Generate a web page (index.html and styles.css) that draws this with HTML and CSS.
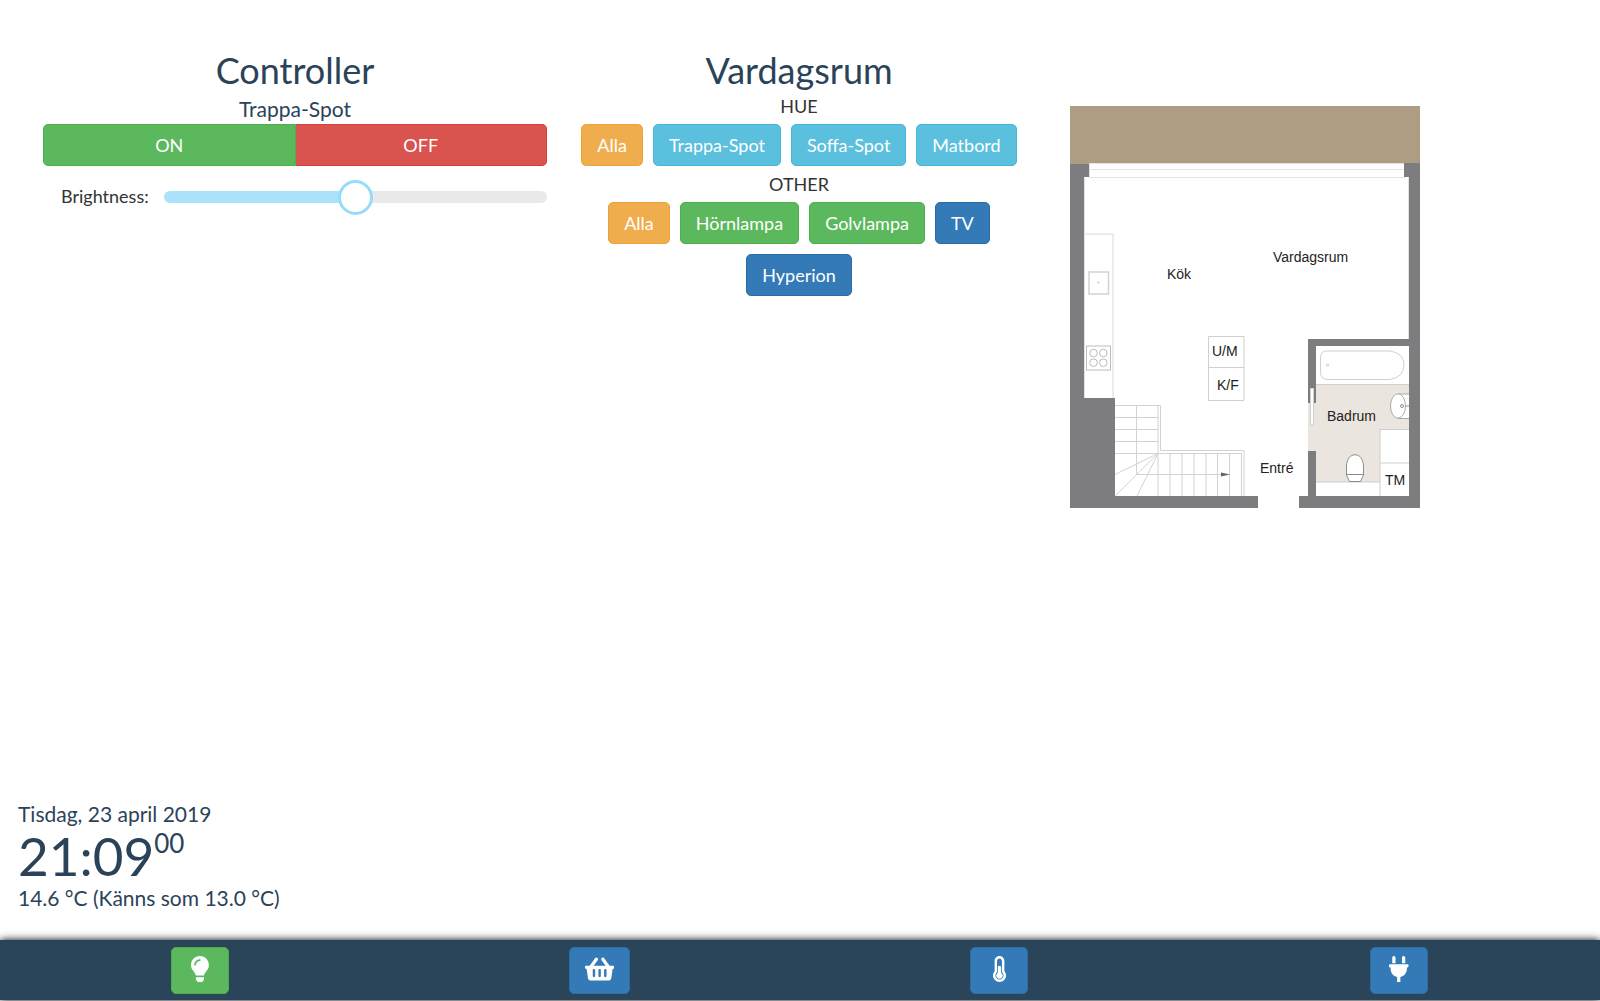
FILE: index.html
```html
<!DOCTYPE html>
<html lang="sv">
<head>
<meta charset="utf-8">
<meta name="viewport" content="width=device-width, initial-scale=1">
<title>Vardagsrum</title>
<link rel="stylesheet" href="styles.css">
</head>
<body>
<main class="panels">
  <section class="panel">
    <h1 class="title">Controller</h1>
    <h2 class="device">Trappa-Spot</h2>
    <div class="switch">
      <button type="button" class="btn btn-success">ON</button>
      <button type="button" class="btn btn-danger">OFF</button>
    </div>
    <div class="brightness">
      <label for="brightness">Brightness:</label>
      <input id="brightness" class="slider" type="range" min="0" max="100" value="50">
    </div>
  </section>

  <section class="panel">
    <h1 class="title">Vardagsrum</h1>
    <h2 class="group">HUE</h2>
    <div class="lights">
      <button type="button" class="btn btn-warning">Alla</button>
      <button type="button" class="btn btn-info">Trappa-Spot</button>
      <button type="button" class="btn btn-info">Soffa-Spot</button>
      <button type="button" class="btn btn-info">Matbord</button>
    </div>
    <h2 class="group">OTHER</h2>
    <div class="lights">
      <button type="button" class="btn btn-warning">Alla</button>
      <button type="button" class="btn btn-success">Hörnlampa</button>
      <button type="button" class="btn btn-success">Golvlampa</button>
      <button type="button" class="btn btn-primary">TV</button>
      <button type="button" class="btn btn-primary">Hyperion</button>
    </div>
  </section>

  <section class="panel panel-plan">
    <svg class="plan" viewBox="0 0 350 402" role="img" aria-label="Planritning">
      <rect width="350" height="59" fill="#af9d83"/>
      <!-- window -->
      <g fill="#fff" stroke="#e2e2e2">
        <rect x="19.500" y="57.500" width="315" height="14"/>
        <path d="M19 63.500H334"/>
      </g>
      <!-- walls -->
      <path fill="#7d7d7f" d="M0 58H19V71H14V292H45V390H188V402H0ZM334 57H350V402H229V390H238V345H246V390H339V240H246V297H238V233H339V71H334Z"/>
      <path fill="none" stroke="#e2e2e2" d="M14.500 292V71.500M338.500 233V71.500"/>
      <!-- kitchen -->
      <g fill="none" stroke="#e6e6e6">
        <path d="M14 128H43V292" stroke-width="1.500"/>
        <rect x="19" y="166" width="19.500" height="22" stroke="#d2d2d2" stroke-width="1.500"/>
        <circle cx="28.500" cy="176.500" r=".7" stroke="#ccc"/>
        <g stroke="#bcbcbc">
          <rect x="16.500" y="240" width="24" height="24"/>
          <circle cx="23.500" cy="247" r="3.800"/><circle cx="33.300" cy="247" r="3.800"/>
          <circle cx="23.500" cy="256.700" r="3.800"/><circle cx="33.300" cy="256.700" r="3.800"/>
        </g>
      </g>
      <path fill="none" stroke="#d0d0d0" d="M138.500 230.500H174V294.500H138.500ZM138.500 261.500H174"/>
      <!-- stairs -->
      <path fill="none" stroke="#d2d2d2" d="M45 299.500H90.500V344.500H174V390M88 299.500V347.500H171.500V390M66.500 299.500V368.500H151M45 311.500H88M45 323.500H88M45 335.500H88M45 347.500H88V390M88 347.500L45 368.500M88 347.500L45 390M88 347.500L67 390M100 347.500V390M112 347.500V390M124 347.500V390M136 347.500V390M147.500 347.500V390M159.500 347.500V390"/>
      <path fill="#666" d="M151 366.500L160 368.500L151 370.500Z"/>
      <!-- bathroom -->
      <path fill="#eae6df" d="M246 278H339V323H310V376H246V345H238V297H246Z"/>
      <g fill="#fff" stroke="#cfcfcf">
        <path fill="none" d="M246 278.500H339M246 376H310M310 390V323.500H339M310 357H339"/>
        <path d="M257 245H320Q334 247 334 259T320 273.500H257Q250.500 273 250.500 266V252Q250.500 245 257 245Z"/>
        <circle cx="257.500" cy="259" r="1.200"/>
        <rect x="240.500" y="282.500" width="3" height="36.500"/>
        <g stroke="#8c8c8c">
          <path stroke="#aaa" d="M339 288H328V312.500H339"/>
          <ellipse cx="328" cy="300" rx="7.500" ry="12.200" stroke="#aaa"/>
          <circle cx="332" cy="300" r="1.500"/><path d="M336 300H339"/>
          <path d="M276.500 369V360C277 353 280 348.800 285 348.800S293 353 293.500 360V369L290.500 375.500H279.500ZM277 368.500H293"/>
        </g>
      </g>
      <g class="plan-text">
        <text x="97" y="173">Kök</text>
        <text x="203" y="156">Vardagsrum</text>
        <text x="142" y="250">U/M</text>
        <text x="147" y="284">K/F</text>
        <text x="257" y="315">Badrum</text>
        <text x="190" y="367">Entré</text>
        <text x="315" y="379">TM</text>
      </g>
    </svg>
  </section>
</main>

<section class="status">
  <p class="info">Tisdag, 23 april 2019</p>
  <p class="clock"><span>21:09</span><span class="seconds">00</span></p>
  <p class="info">14.6 °C (Känns som 13.0 °C)</p>
</section>

<nav class="tabs">
  <div class="tab"><button type="button" class="tab-btn btn-success" aria-label="Belysning">
    <svg class="icon" viewBox="0 0 352 512"><path d="M96.060 454.350c.01 6.290 1.870 12.450 5.360 17.690l17.090 25.690a31.990 31.990 0 0 0 26.640 14.280h61.710a31.990 31.990 0 0 0 26.640-14.280l17.090-25.690a31.989 31.989 0 0 0 5.360-17.690l.04-38.350H96.010l.05 38.350zM0 176c0 44.370 16.450 84.850 43.560 115.780 16.520 18.850 42.360 58.230 52.210 91.450.04.26.07.52.11.78h160.240c.04-.26.07-.51.11-.78 9.850-33.220 35.690-72.600 52.210-91.450C335.550 260.850 352 220.370 352 176 352 78.610 272.910-.3 175.450 0 73.440.31 0 82.970 0 176zm176-80c-44.110 0-80 35.890-80 80 0 8.840-7.160 16-16 16s-16-7.160-16-16c0-61.760 50.240-112 112-112 8.840 0 16 7.160 16 16s-7.160 16-16 16z"/></svg>
  </button></div>
  <div class="tab"><button type="button" class="tab-btn btn-primary" aria-label="Inköp">
    <svg class="icon" viewBox="0 0 576 512"><path d="M576 216v16c0 13.255-10.745 24-24 24h-8l-26.113 182.788C514.509 462.435 494.257 480 470.370 480H105.630c-23.887 0-44.139-17.565-47.518-41.212L32 256h-8c-13.255 0-24-10.745-24-24v-16c0-13.255 10.745-24 24-24h67.341l106.780-146.821c10.395-14.292 30.407-17.453 44.701-7.058 14.293 10.395 17.453 30.408 7.058 44.701L170.477 192h235.046L326.120 82.821c-10.395-14.292-7.234-34.306 7.059-44.701 14.291-10.395 34.306-7.235 44.701 7.058L484.659 192H552c13.255 0 24 10.745 24 24zM312 392V280c0-13.255-10.745-24-24-24s-24 10.745-24 24v112c0 13.255 10.745 24 24 24s24-10.745 24-24zm112 0V280c0-13.255-10.745-24-24-24s-24 10.745-24 24v112c0 13.255 10.745 24 24 24s24-10.745 24-24zm-224 0V280c0-13.255-10.745-24-24-24s-24 10.745-24 24v112c0 13.255 10.745 24 24 24s24-10.745 24-24z"/></svg>
  </button></div>
  <div class="tab"><button type="button" class="tab-btn btn-primary" aria-label="Temperatur">
    <svg class="icon" viewBox="0 0 256 512"><path d="M192 384c0 35.346-28.654 64-64 64s-64-28.654-64-64c0-23.685 12.876-44.349 32-55.417V224c0-17.673 14.327-32 32-32s32 14.327 32 32v104.583c19.124 11.068 32 31.732 32 55.417zm32-84.653c19.912 22.563 32 52.194 32 84.653 0 70.696-57.303 128-128 128-.299 0-.609-.001-.909-.003C56.789 511.509-.357 453.636.002 383.333.166 351.135 12.224 321.756 32 299.347V96c0-53.019 42.981-96 96-96s96 42.981 96 96v203.347zM208 384c0-34.339-19.370-52.190-32-66.502V96c0-26.467-21.533-48-48-48S80 69.533 80 96v221.498c-12.732 14.428-31.825 32.100-31.999 66.080-.224 43.876 35.563 80.116 79.423 80.420L128 464c44.112 0 80-35.888 80-80z"/></svg>
  </button></div>
  <div class="tab"><button type="button" class="tab-btn btn-primary" aria-label="Ström">
    <svg class="icon" viewBox="0 0 384 512"><path d="M256 144V32c0-17.673 14.327-32 32-32s32 14.327 32 32v112h-64zm112 16H16c-8.837 0-16 7.163-16 16v32c0 8.837 7.163 16 16 16h16v32c0 77.406 54.969 141.971 128 156.796V512h64v-99.204c73.031-14.825 128-79.390 128-156.796v-32h16c8.837 0 16-7.163 16-16v-32c0-8.837-7.163-16-16-16zm-240-16V32c0-17.673-14.327-32-32-32S64 14.327 64 32v112h64z"/></svg>
  </button></div>
</nav>
</body>
</html>
```
FILE: styles.css
```css
* { box-sizing: border-box; }

body {
  display: flex;
  flex-direction: column;
  min-height: 100vh;
  margin: 0;
  padding-bottom: 1px;
  background: #fff;
  color: #333;
  font: 18px/26px Lato, "Liberation Sans", sans-serif;
}

h1, h2, p { margin: 0; font-weight: 400; }

.panels {
  display: grid;
  grid-template-columns: repeat(3, minmax(0, 1fr));
  flex: 1;
  padding: 49px 45px 0 43px;
}

.title {
  padding-bottom: 2px;
  color: #2a4359;
  font-size: 36px;
  line-height: 42px;
  text-align: center;
}

.device {
  color: #2a4359;
  font-size: 21px;
  line-height: 31px;
  text-align: center;
}

.group { font-size: 18px; text-align: center; }

.btn {
  height: 42px;
  padding: 0 15px;
  border: 1px solid;
  border-radius: 5px;
  color: #fff;
  font: inherit;
  cursor: pointer;
}

.btn-success { background: #5cb85c; border-color: #4cae4c; }
.btn-danger { background: #d9534f; border-color: #d43f3a; }
.btn-warning { background: #f0ad4e; border-color: #eea236; }
.btn-info { background: #5bc0de; border-color: #46b8da; }
.btn-primary { background: #337ab7; border-color: #2e6da4; }

.switch { display: flex; }
.switch .btn { flex: 1; padding-bottom: 1px; }
.switch .btn:first-child { border-radius: 5px 0 0 5px; }
.switch .btn:last-child { border-radius: 0 5px 5px 0; border-left: 0; }

.brightness {
  display: flex;
  align-items: center;
  gap: 15px;
  margin-top: 13px;
  padding-left: 18px;
}

.brightness label { padding-bottom: 3px; }

.slider {
  flex: 1;
  min-width: 0;
  height: 36px;
  margin: 0;
  background: none;
  appearance: none;
}

.slider::-webkit-slider-runnable-track {
  height: 12px;
  border-radius: 6px;
  background: linear-gradient(to right, #abe2fb 50%, #e9e9e9 50%);
}

.slider::-webkit-slider-thumb {
  width: 35px;
  height: 35px;
  margin-top: -11px;
  border: 3px solid #96dbfa;
  border-radius: 50%;
  background: #fff;
  appearance: none;
}

.lights {
  display: flex;
  flex-wrap: wrap;
  justify-content: center;
  gap: 10px;
  padding: 5px 15px;
}

.panel-plan { padding: 57px 19px 0; }
.plan { display: block; width: 100%; max-width: 350px; }
.plan-text { fill: #222; font: 14px "Liberation Sans", sans-serif; }

.status { padding: 0 18px 26px; color: #2a4359; }
.info { font-size: 21px; line-height: 32px; }
.clock { display: flex; font-size: 53px; line-height: 52px; }
.seconds { font-size: 26px; line-height: 26px; }

.tabs {
  display: flex;
  height: 60px;
  padding-right: 1px;
  background: #2a4459;
  box-shadow: 0 0 8px #000;
}

.tab {
  display: flex;
  flex: 1;
  align-items: center;
  justify-content: center;
}

.tab-btn {
  display: flex;
  align-items: flex-start;
  justify-content: center;
  min-width: 58px;
  height: 47px;
  padding: 8px 15px;
  border-width: 1px;
  border-style: solid;
  border-radius: 5px;
  cursor: pointer;
}

.icon { display: block; height: 26px; fill: #fff; }
```
